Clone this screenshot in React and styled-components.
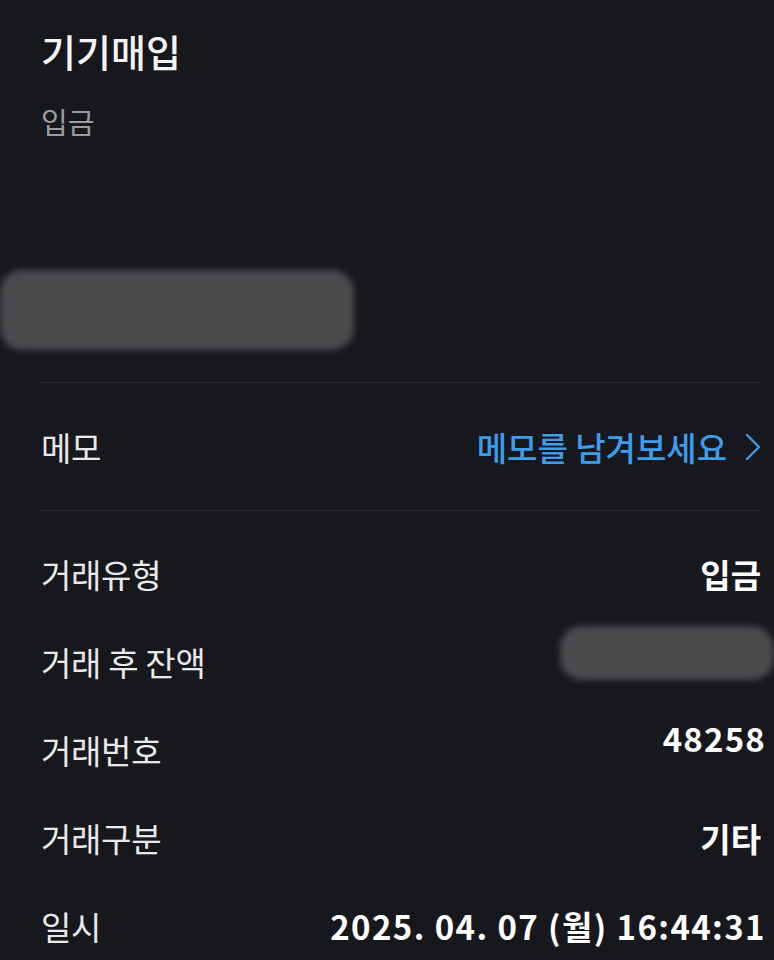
import React from 'react';
import styled, { createGlobalStyle } from 'styled-components';

const GlobalStyle = createGlobalStyle`
  html, body {
    margin: 0;
    padding: 0;
    background: #17181d;
  }
  body {
    font-family: 'Noto Sans CJK KR', 'Noto Sans', sans-serif;
    color: #ececee;
  }
`;

const Page = styled.div`
  width: 774px;
  height: 960px;
  overflow: hidden;
  background: #17181d;
  box-sizing: border-box;
  padding-top: 23px;
`;

const Header = styled.div`
  padding: 0 41px;
  display: flex;
  flex-direction: column;
  gap: 22px;
`;

const Title = styled.h1`
  margin: 0;
  font-size: 38px;
  font-weight: 500;
  line-height: 56px;
  color: #f4f4f6;
`;

const Sub = styled.div`
  font-size: 29px;
  line-height: 40px;
  color: #9b9ca1;
`;

const AmountArea = styled.div`
  height: 241px;
  display: flex;
  align-items: flex-end;
  padding-bottom: 32px;
  box-sizing: border-box;
`;

const Smudge = styled.div`
  width: ${(p) => p.$w}px;
  height: ${(p) => p.$h}px;
  background: #4a4a4d;
  border-radius: 22px;
  filter: blur(3px);
  margin-bottom: ${(p) => p.$up || 0}px;
  margin-right: ${(p) => p.$right || 0}px;
`;

const Divider = styled.div`
  height: 1px;
  margin-left: 41px;
  margin-right: 13px;
  background: #2c2d33;
`;

const Row = styled.div`
  height: ${(p) => p.$h || 88}px;
  display: flex;
  align-items: center;
  justify-content: space-between;
  padding: 0 8px 0 41px;
`;

const Label = styled.span`
  font-size: 33px;
  color: #e9e9ec;
  letter-spacing: -0.3px;
`;

const Value = styled.span`
  font-size: 33px;
  font-weight: 600;
  color: #ffffff;
  letter-spacing: ${(p) => p.$spacing || 0}px;
  margin-bottom: ${(p) => p.$up || 0}px;
  margin-right: ${(p) => p.$right || 0}px;
`;

const MemoLink = styled.button`
  display: flex;
  align-items: center;
  gap: 18px;
  background: none;
  border: 0;
  padding: 0;
  margin-right: 5px;
  color: #3e9ceb;
  font-family: inherit;
  font-size: 33px;
  font-weight: 500;
  cursor: pointer;
`;

const Details = styled.div`
  padding-top: 19px;
`;

const Chevron = () => (
  <svg width="16" height="28" viewBox="0 0 16 28" fill="none">
    <path d="M2 2 L14 14 L2 26" stroke="#3e9ceb" strokeWidth="2.4" strokeLinecap="round" strokeLinejoin="round" />
  </svg>
);

export default function App() {
  return (
    <Page>
      <GlobalStyle />
      <Header>
        <Title>기기매입</Title>
        <Sub>입금</Sub>
      </Header>
      <AmountArea>
        <Smudge $w={354} $h={80} />
      </AmountArea>
      <Divider />
      <Row $h={127}>
        <Label>메모</Label>
        <MemoLink type="button">
          메모를 남겨보세요
          <Chevron />
        </MemoLink>
      </Row>
      <Divider />
      <Details>
        <Row>
          <Label>거래유형</Label>
          <Value $right={5}>입금</Value>
        </Row>
        <Row>
          <Label>거래 후 잔액</Label>
          <Smudge $w={214} $h={54} $up={18} $right={-8} />
        </Row>
        <Row>
          <Label>거래번호</Label>
          <Value $up={24} $spacing={1.2}>48258</Value>
        </Row>
        <Row>
          <Label>거래구분</Label>
          <Value $right={5}>기타</Value>
        </Row>
        <Row>
          <Label>일시</Label>
          <Value $spacing={1.4}>2025. 04. 07 (월) 16:44:31</Value>
        </Row>
      </Details>
    </Page>
  );
}
